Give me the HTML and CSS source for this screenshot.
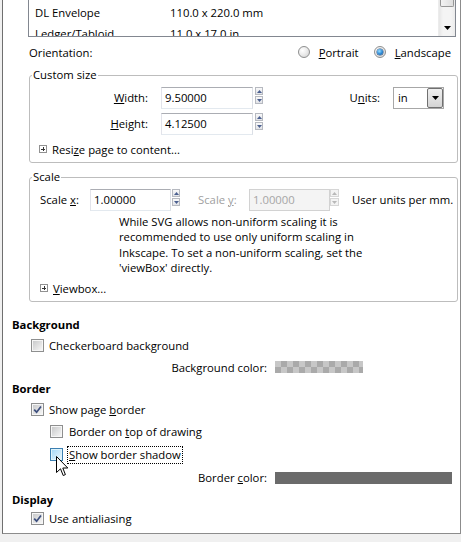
FILE: index.html
```html
<!DOCTYPE html>
<html>
<head>
<meta charset="utf-8">
<title>Document Properties</title>
<link rel="stylesheet" href="styles.css">
</head>
<body>
<div class="page">
  <div class="listbox">
    <div class="rows">
      <div class="lrow"><span class="c1">DL Envelope</span><span>110.0 x 220.0 mm</span></div>
      <div class="lrow"><span class="c1">Ledger/Tabloid</span><span>11.0 x 17.0 in</span></div>
    </div>
    <div class="vscroll">
      <div class="thumb"></div>
      <div class="down"><svg width="7" height="4" viewBox="0 0 7 4"><polygon points="0,0 7,0 3.5,4" fill="#000"/></svg></div>
    </div>
  </div>

  <div class="orient">
    <span>Orientation:</span>
    <span class="spacer"></span>
    <span class="radio-item"><span class="radio"></span><span><u>P</u>ortrait</span></span>
    <span class="radio-item second"><span class="radio on"></span><span><u>L</u>andscape</span></span>
  </div>

  <fieldset class="frame custom">
    <legend>Custom size</legend>
    <div class="frow">
      <span class="flabel"><u>W</u>idth:</span>
      <div class="entry">9.50000</div>
      <div class="spin">
        <i><svg width="5" height="3" viewBox="0 0 5 3"><polygon points="0,3 5,3 2.5,0" fill="#4a5f8f"/></svg></i>
        <i><svg width="5" height="3" viewBox="0 0 5 3"><polygon points="0,0 5,0 2.5,3" fill="#4a5f8f"/></svg></i>
      </div>
      <span class="spacer"></span>
      <span class="ulabel">U<u>n</u>its:</span>
      <div class="combo"><span>in</span><span class="cbtn"><svg width="7" height="4" viewBox="0 0 7 4"><polygon points="0,0 7,0 3.5,4" fill="#000"/></svg></span></div>
    </div>
    <div class="frow">
      <span class="flabel"><u>H</u>eight:</span>
      <div class="entry">4.12500</div>
      <div class="spin">
        <i><svg width="5" height="3" viewBox="0 0 5 3"><polygon points="0,3 5,3 2.5,0" fill="#4a5f8f"/></svg></i>
        <i><svg width="5" height="3" viewBox="0 0 5 3"><polygon points="0,0 5,0 2.5,3" fill="#4a5f8f"/></svg></i>
      </div>
    </div>
    <div class="exrow">
      <span class="expander"></span><span>Resi<u>z</u>e page to content...</span>
    </div>
  </fieldset>

  <fieldset class="frame scale">
    <legend>Scale</legend>
    <div class="srow">
      <span class="slabel">Scale <u>x</u>:</span>
      <div class="entry sentry">1.00000</div>
      <div class="spin s1">
        <i><svg width="5" height="3" viewBox="0 0 5 3"><polygon points="0,3 5,3 2.5,0" fill="#4a5f8f"/></svg></i>
        <i><svg width="5" height="3" viewBox="0 0 5 3"><polygon points="0,0 5,0 2.5,3" fill="#4a5f8f"/></svg></i>
      </div>
      <span class="slabel ylabel disabled">Scale <u>y</u>:</span>
      <div class="entry sentry off">1.00000</div>
      <div class="spin s2 off">
        <i><svg width="5" height="3" viewBox="0 0 5 3"><polygon points="0,3 5,3 2.5,0" fill="#b8b8b8"/></svg></i>
        <i><svg width="5" height="3" viewBox="0 0 5 3"><polygon points="0,0 5,0 2.5,3" fill="#b8b8b8"/></svg></i>
      </div>
      <span class="uunits">User units per mm.</span>
    </div>
    <p class="note">While SVG allows non-uniform scaling it is<br>recommended to use only uniform scaling in<br>Inkscape. To set a non-uniform scaling, set the<br>'viewBox' directly.</p>
    <div class="exrow vb">
      <span class="expander"></span><span><u>V</u>iewbox...</span>
    </div>
  </fieldset>

  <div class="lower">
    <div class="row h22 head">Background</div>
    <div class="row h21 l1"><span class="cb"></span><span class="cbl">Checkerboard background</span></div>
    <div class="row h22 colorrow"><span class="clabel">Background color:</span><span class="swatch checker"></span></div>
    <div class="row h21 head">Border</div>
    <div class="row h21 l1"><span class="cb"><svg width="9" height="9" viewBox="0 0 9 9"><path d="M1.2 4.6 L3.6 7.2 L8 1.4" fill="none" stroke="#3d4f7e" stroke-width="1.7"/></svg></span><span class="cbl">Show page <u>b</u>order</span></div>
    <div class="row h23 l2"><span class="cb"></span><span class="cbl">Border on <u>t</u>op of drawing</span></div>
    <div class="row h23 l2 pointer"><span class="cb hover"></span><span class="cbl focus"><u>S</u>how border shadow</span>
      <svg class="cursor" width="13" height="21" viewBox="0 0 13 21"><path d="M0.5 0.5 V16.5 L4.5 12.8 L7.2 19.5 L9.4 18.6 L6.8 12 H11.8 Z" fill="#fff" stroke="#000" stroke-width="1"/></svg>
    </div>
    <div class="row h23 colorrow"><span class="clabel">Border <u>c</u>olor:</span><span class="swatch dark"></span></div>
    <div class="row h20 head">Display</div>
    <div class="row h19 l1"><span class="cb"><svg width="9" height="9" viewBox="0 0 9 9"><path d="M1.2 4.6 L3.6 7.2 L8 1.4" fill="none" stroke="#3d4f7e" stroke-width="1.7"/></svg></span><span class="cbl">Use antialiasing</span></div>
  </div>
</div>
</body>
</html>
```
FILE: styles.css
```css
* { box-sizing: border-box; }
html, body { margin: 0; padding: 0; }
body {
  background: #f0f0f0;
  font-family: "Open Sans", "Segoe UI", sans-serif;
  font-size: 11.3px;
  color: #000;
  width: 461px;
  height: 542px;
  overflow: hidden;
}
u { text-decoration: underline; text-underline-offset: 1px; }

.page {
  margin-left: 2px;
  width: 459px;
  height: 534px;
  background: #fff;
  border-left: 1px solid #6f6f6f;
  border-right: 1px solid #8c8c8c;
  border-bottom: 1px solid #8c8c8c;
  overflow: hidden;
}

/* list box */
.listbox {
  margin: 0 4px 0 25px;
  height: 37px;
  border: 1px solid #828790;
  border-top: none;
  display: flex;
  overflow: hidden;
}
.rows { flex: 1; padding-top: 2px; }
.lrow { height: 21px; line-height: 21px; padding-left: 6px; display: flex; white-space: nowrap; }
.c1 { width: 135px; }
.vscroll {
  width: 17px;
  background: linear-gradient(90deg, #e6e6e6, #f4f4f4 25%, #f4f4f4 75%, #ebebeb);
  border-left: 1px solid #ececec;
  display: flex;
  flex-direction: column;
  justify-content: space-between;
}
.thumb {
  height: 7px;
  margin: 0 1px;
  border: 1px solid #979797;
  border-top: none;
  border-radius: 0 0 2px 2px;
  background: linear-gradient(90deg, #f3f3f3, #dedede);
}
.down { height: 17px; display: flex; align-items: center; justify-content: center; }
.down svg { display: block; }

/* orientation */
.orient {
  height: 30px;
  padding: 0 9px 0 26px;
  display: flex;
  align-items: center;
}
.spacer { flex: 1; }
.radio-item { display: flex; align-items: center; }
.radio-item.second { margin-left: 15px; }
.radio {
  width: 12px; height: 12px;
  margin-right: 9px;
  border-radius: 50%;
  border: 1px solid #8e8f8f;
  background: radial-gradient(circle at 35% 35%, #ffffff 0, #ececec 45%, #cfcfcf 100%);
  position: relative;
}
.radio.on::after {
  content: "";
  position: absolute;
  left: 2px; top: 2px;
  width: 6px; height: 6px;
  border-radius: 50%;
  background: radial-gradient(circle at 40% 35%, #9be0ff 0, #2a86d4 55%, #164f8a 100%);
  box-shadow: 0 0 0 0.5px #2c4f7a;
}

/* frames */
.frame {
  margin: 0 2px 0 26px;
  padding: 0 13px 0 0;
  border: 1px solid #bdbdbd;
  border-radius: 3px;
  min-width: 0;
}
.frame legend {
  margin-left: 2px;
  padding: 0 1px;
  line-height: 16px;
}
.custom { padding-bottom: 5px; }
.frow { display: flex; align-items: flex-start; height: 22px; margin-top: 4px; white-space: nowrap; }
.frow > *, .srow > * { flex: none; }
.frow > .spacer { flex: 1; }
.flabel { width: 118px; text-align: right; line-height: 22px; }
.entry {
  height: 22px;
  border: 1px solid #abadb3;
  border-color: #abadb3 #dbdfe6 #e3e9ef #e2e3ea;
  padding-left: 3px;
  line-height: 20px;
}
.frow .entry { width: 92px; margin-left: 13px; }
.spin { width: 8px; margin-left: 2px; display: flex; flex-direction: column; gap: 1px; }
.spin i {
  height: 8px;
  border: 1px solid #b6b9c0;
  background: linear-gradient(#f9f9f9, #e1e3e8);
  display: flex; align-items: center; justify-content: center;
}
.spin svg { display: block; }
.spin.off i { border-color: #d6d6d6; background: #f3f3f3; }
.ulabel { line-height: 22px; }
.combo {
  width: 51px; height: 22px;
  margin-left: 13px;
  border: 1px solid #a7a7a7;
  display: flex;
  justify-content: space-between;
  line-height: 20px;
  padding-left: 4px;
}
.cbtn {
  width: 16px;
  border: 1px solid #707070;
  border-radius: 2px;
  background: linear-gradient(#f0f0f0, #d4d4d4);
  display: flex; align-items: center; justify-content: center;
}
.cbtn svg { display: block; }
.exrow { display: flex; align-items: center; height: 16px; margin-top: 6px; padding-left: 9px; }
.expander {
  width: 8px; height: 8px;
  margin-right: 5px;
  border: 1px solid #919191;
  background:
    linear-gradient(#333, #333) center / 4px 1px no-repeat,
    linear-gradient(#333, #333) center / 1px 4px no-repeat,
    #fff;
}

.scale { margin-top: 6px; padding-bottom: 5px; }
.srow { display: flex; align-items: flex-start; height: 22px; margin-top: 4px; padding-left: 10px; white-space: nowrap; }
.slabel { width: 50px; line-height: 22px; }
.ylabel { width: 51px; margin-left: 18px; }
.disabled { color: #a0a0a0; }
.sentry { width: 81px; }
.spin.s1 { margin-left: 1px; }
.spin.s2 { margin-left: 0; width: 9px; }
.entry.off { background: #f4f4f4; border-color: #d2d2d2; color: #a6a6a6; }
.uunits { margin-left: 13px; line-height: 22px; }
.note { margin: 3px 0 0 89px; line-height: 15.33px; white-space: nowrap; }
.exrow.vb { margin-top: 5px; padding-left: 10px; }

/* lower section */
.lower { margin-top: 11px; padding-left: 9px; }
.row { display: flex; align-items: center; white-space: nowrap; }
.h19 { height: 19px; } .h20 { height: 20px; } .h21 { height: 21px; }
.h22 { height: 22px; } .h23 { height: 23px; }
.head { font-weight: 700; }
.l1 { padding-left: 19px; }
.l2 { padding-left: 38px; }
.cb {
  width: 13px; height: 13px;
  flex: none;
  border: 1px solid #8e8f8f;
  padding: 1px;
  background: linear-gradient(135deg, #c9cacb, #f5f5f5) content-box, #f6f6f6;
  display: flex; align-items: center; justify-content: center;
}
.cb svg { display: block; }
.cb.hover {
  border-color: #3c7fb1;
  background: linear-gradient(135deg, #a7d9f7, #e8f6fd) content-box, #def4fc;
}
.cbl { margin-left: 3px; padding: 0 1px; border: 1px solid transparent; line-height: 16px; }
.l2 .cbl { margin-left: 4px; }
.cbl.focus { border: 1px dotted #000; }
.pointer { position: relative; }
.cursor { position: absolute; left: 44px; top: 13px; }
.colorrow { padding-left: 0; }
.clabel { width: 255px; text-align: right; }
.swatch { height: 12px; margin-left: 8px; }
.checker {
  width: 88px;
  background: repeating-conic-gradient(#aaaaaa 0 25%, #c7c7c7 0 50%) 0 0 / 12px 12px;
}
.dark { width: 177px; background: #6b6b6b; }
```
